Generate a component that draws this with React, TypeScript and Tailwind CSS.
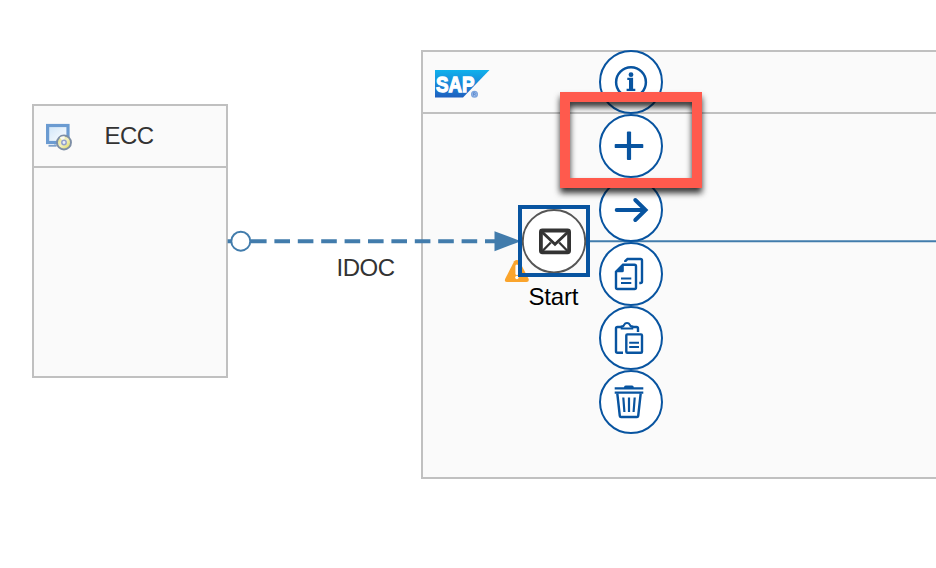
import type { ReactNode } from "react";

function SystemIcon() {
  return (
    <svg className="mt-0.5" width="28" height="28" viewBox="0 0 28 28" fill="none">
      <defs>
        <linearGradient id="screen" x1="0" y1="0" x2="1" y2="1">
          <stop offset="0" stopColor="#cfe5f8" />
          <stop offset="1" stopColor="#ffffff" />
        </linearGradient>
        <linearGradient id="disc" x1="0" y1="0" x2="1" y2="1">
          <stop offset="0" stopColor="#dedc7c" />
          <stop offset="0.5" stopColor="#f2f0c0" />
          <stop offset="1" stopColor="#d9d24c" />
        </linearGradient>
      </defs>
      <path d="M8 19h8v4H8z" fill="#b9cfe6" />
      <path d="M2.5 22.800h8" stroke="#7d9fc8" strokeWidth="1.800" />
      <rect x="1.600" y="2.500" width="20.400" height="17" fill="url(#screen)" stroke="#6b9bd1" strokeWidth="3.200" />
      <circle cx="18" cy="19.500" r="7" fill="url(#disc)" stroke="#7d8ea6" strokeWidth="1.900" />
      <path d="M18 19.500L13.800 14.600a6.100 6.100 0 0 1 5-1.200z" fill="#fbfbf0" />
      <circle cx="18" cy="19.500" r="2.200" fill="#e9eefb" stroke="#93a0cc" strokeWidth="1.500" />
    </svg>
  );
}

function SapLogo() {
  return (
    <svg width="55" height="28" viewBox="0 0 55 28">
      <defs>
        <linearGradient id="sap" x1="0" y1="0" x2="0" y2="1">
          <stop offset="0" stopColor="#0fb2ec" />
          <stop offset="0.55" stopColor="#1b83d6" />
          <stop offset="1" stopColor="#1d5fbe" />
        </linearGradient>
      </defs>
      <path d="M0 0H54.500L28 27.500H0z" fill="url(#sap)" />
      <text
        x="1" y="21.800" textLength="38.500" lengthAdjust="spacingAndGlyphs"
        className="fill-white stroke-white font-['Liberation_Sans',Arial,sans-serif] text-[22.500px] font-bold"
        strokeWidth="1.300"
      >
        SAP
      </text>
      <circle cx="39.500" cy="24.200" r="2.900" fill="#9fbce8" stroke="#7ba3dc" strokeWidth="1.200" />
      <path d="M38.500 25.700v-3h1.500l.6.8-.6.8h-1.300M40 24.300l.8 1.400" stroke="#4c80cc" strokeWidth="0.700" fill="none" />
    </svg>
  );
}

const actions: { name: string; icon: ReactNode }[] = [
  {
    name: "Information",
    icon: (
      <>
        <circle cx="32" cy="32.200" r="14.900" strokeWidth="2.500" />
        <circle cx="32" cy="24.700" r="2.400" fill="currentColor" stroke="none" />
        <path d="M28.300 27.800H34.100V38.700H36.300V41H27.600V38.700H30V30.100H28.300z" fill="currentColor" stroke="none" />
      </>
    ),
  },
  {
    name: "Add",
    icon: (
      <g fill="currentColor" stroke="none">
        <rect x="15.700" y="29.900" width="28.600" height="4.200" rx="0.900" />
        <rect x="27.900" y="17.500" width="4.200" height="28.500" rx="0.900" />
      </g>
    ),
  },
  {
    name: "Connect",
    icon: <path d="M17.700 32H46.300M36.300 22L46.500 32L36.300 42" strokeWidth="4" strokeLinecap="round" />,
  },
  {
    name: "Copy",
    icon: (
      <>
        <path d="M26.300 20V19L28.500 17H41.500Q43 17 43 18.500V39.500Q43 41 41.500 41H40.300" />
        <path d="M24 22.700H35.500Q37 22.700 37 24.200V45.500Q37 47 35.500 47H18.500Q17 47 17 45.500V29.700z" />
        <path d="M16.300 30L24.800 21.800V28.800Q24.800 30.300 23.300 30.300H16.300z" fill="currentColor" stroke="none" />
        <path d="M22 36.500H32.300M22 41H32.300" strokeWidth="2" />
      </>
    ),
  },
  {
    name: "Paste",
    icon: (
      <>
        <path d="M23 21H18.500Q17 21 17 22.500V45.300Q17 46.800 18.500 46.800H24M33 21H37.500Q39 21 39 22.500V26" />
        <path d="M22.800 22.500V20.500Q25 20.200 25.500 18.300Q26 17 28 17Q30 17 30.500 18.300Q31 20.200 33.200 20.500V22.500z" strokeWidth="2.100" />
        <rect x="27.300" y="28.400" width="15.700" height="18.400" rx="1" />
        <path d="M30.200 36.700H40M30.200 41H40" strokeWidth="2" />
      </>
    ),
  },
  {
    name: "Delete",
    icon: (
      <>
        <path d="M25 18V16.700Q25.500 15.600 27 15.600H32.700Q34.200 15.600 34.700 16.700V18z" fill="currentColor" stroke="none" />
        <path d="M15.700 18.400H44.300M15.700 22.600H44.300" strokeWidth="2.200" />
        <path d="M18.300 23.500L20.800 46Q21 47 22 47H38Q39 47 39.200 46L41.700 23.500" />
        <path d="M24.300 27.500L25.400 42M30 27.500V42M35.700 27.500L34.600 42" strokeWidth="2.200" />
      </>
    ),
  },
];

function ActionMenu() {
  return (
    <div className="absolute top-[50px] left-[599px] flex flex-col text-[#0854a0]">
      {actions.map(({ name, icon }) => (
        <button key={name} aria-label={name} className="size-16 rounded-full border-2 border-current bg-white">
          <svg
            viewBox="0 0 64 64" width="64" height="64" className="-m-0.5 block max-w-none"
            fill="none" stroke="currentColor" strokeWidth="2.400"
          >
            {icon}
          </svg>
        </button>
      ))}
    </div>
  );
}

function Connections() {
  return (
    <svg className="pointer-events-none absolute inset-0" width="936" height="568" fill="none">
      <path d="M227.600 241.200H495" stroke="#427cac" strokeWidth="4" strokeDasharray="15.600 7.800" />
      <circle cx="240.800" cy="241.200" r="9.500" fill="#fff" stroke="#427cac" strokeWidth="2" />
      <path d="M494.500 231.200L521 241.200L494.500 251.200z" fill="#427cac" />
      <path d="M588 241.200H936" stroke="#427cac" strokeWidth="2" />
    </svg>
  );
}

function StartEvent() {
  return (
    <>
      <svg className="absolute top-[259px] left-[504px]" width="26" height="24" viewBox="0 0 26 24">
        <path
          d="M10.200 2.300Q12.800-.3 15.400 2.300L24.700 20Q25.300 23 22.500 23H3Q.4 23 1.100 20z"
          fill="#faa42c"
        />
        <path d="M12.900 7v7.500" stroke="#fff" strokeWidth="3" strokeLinecap="round" />
        <circle cx="12.900" cy="18.500" r="1.700" fill="#fff" />
      </svg>
      <div className="absolute top-[205px] left-[518px] size-[72px] border-4 border-[#0854a0]">
        <svg width="64" height="64" viewBox="0 0 64 64" fill="none">
          <circle cx="32" cy="32.200" r="31.200" fill="#fff" stroke="#555" strokeWidth="1.900" />
          <g stroke="#333" strokeWidth="3.800">
            <rect x="18.900" y="21.500" width="28.200" height="21.800" rx="1.500" />
            <path d="M19.500 22.500L33 35.200L46.500 22.500" strokeWidth="2.900" />
            <path d="M20 42.500L28.800 33.500M46 42.500L37.200 33.500" strokeWidth="2.300" />
          </g>
        </svg>
      </div>
      <span className="absolute top-[283px] left-[528.500px] text-2xl leading-7 tracking-[-0.200px] text-black">Start</span>
    </>
  );
}

export default function App() {
  return (
    <main className="relative h-[568px] w-[936px] overflow-hidden bg-white font-['Liberation_Sans',Arial,sans-serif] text-[#333]">
      <section className="absolute top-[104px] left-[32px] h-[274px] w-[196px] border-2 border-[#c0c0c0] bg-[#fafafa]">
        <header className="flex h-[62px] items-center border-b-2 border-[#c0c0c0] pl-3">
          <SystemIcon />
          <h2 className="ml-[30.500px] text-2xl leading-7 tracking-[-0.600px]">ECC</h2>
        </header>
      </section>

      <section className="absolute top-[50px] left-[421px] h-[429px] w-[600px] border-2 border-[#c0c0c0] bg-[#fafafa]">
        <header className="flex h-[62px] items-center border-b-2 border-[#c0c0c0] pt-1 pl-3">
          <SapLogo />
        </header>
      </section>

      <Connections />
      <span className="absolute top-[254px] left-[336.500px] text-2xl leading-7 tracking-[-0.500px]">IDOC</span>
      <StartEvent />
      <ActionMenu />
      <div className="pointer-events-none absolute top-[92px] left-[560px] h-24 w-[142px] border-10 border-[#ff5a4d] drop-shadow-[0_5px_3px_rgba(0,0,0,0.8)]" />
    </main>
  );
}
